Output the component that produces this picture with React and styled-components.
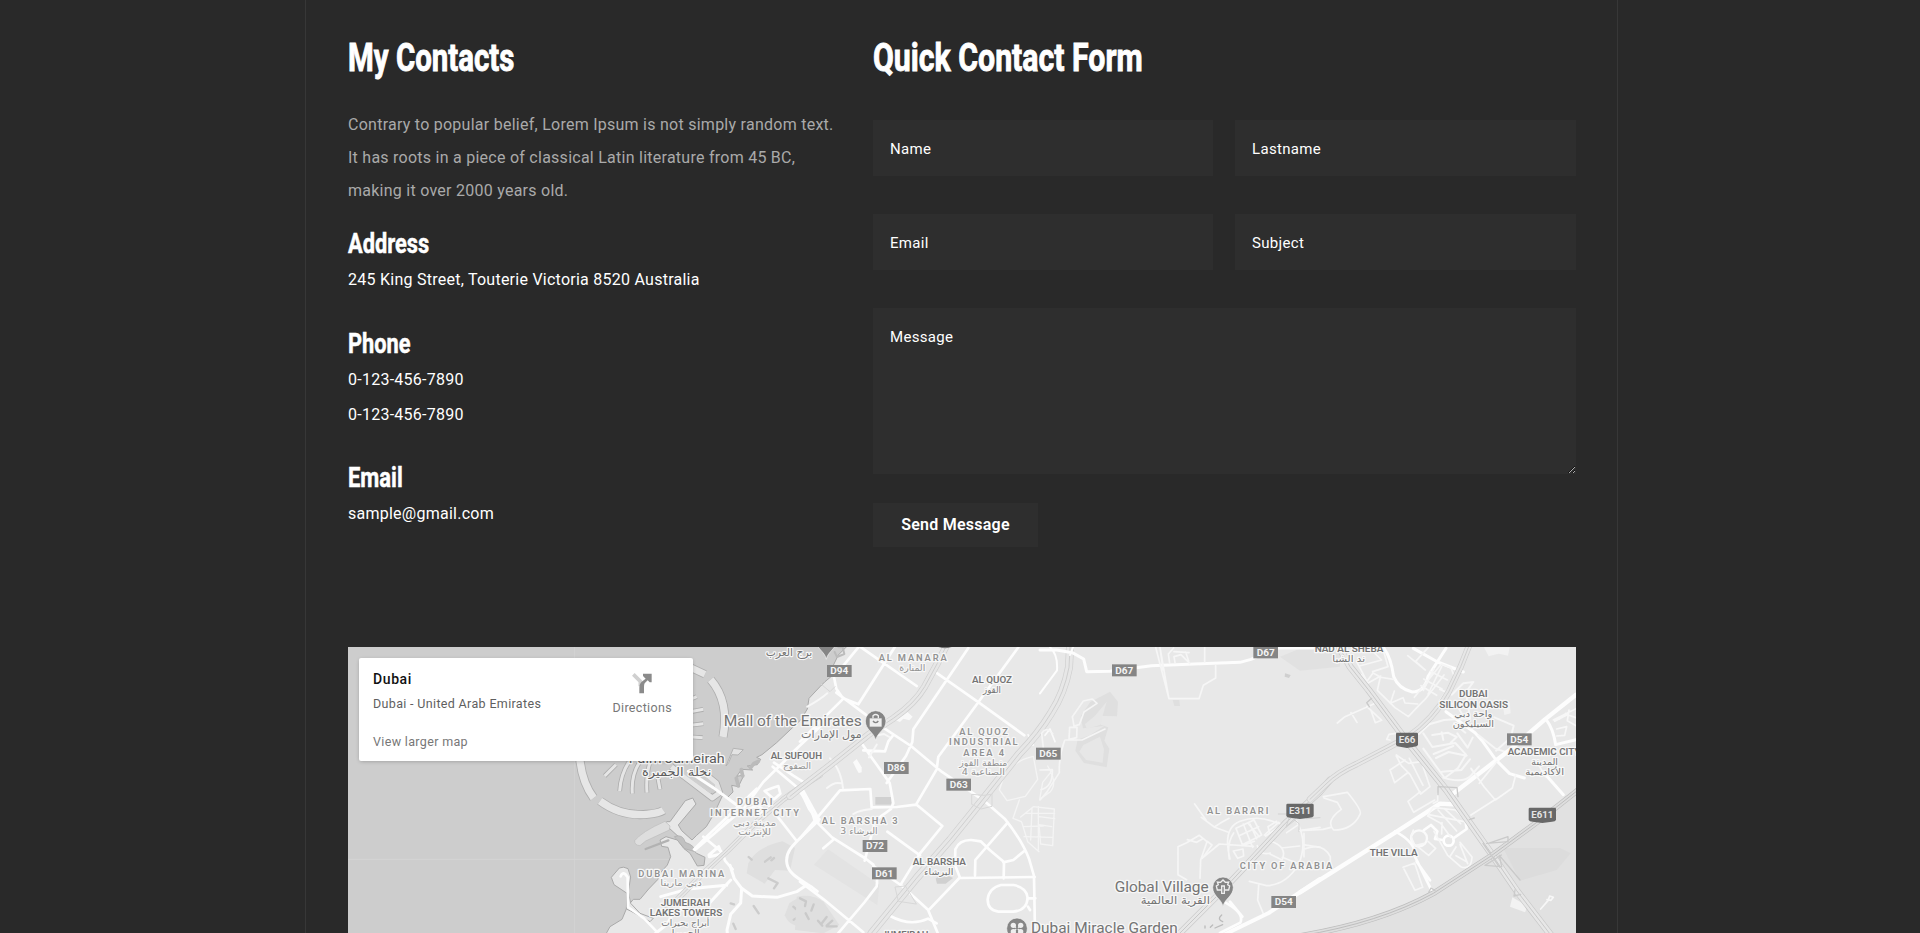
import React from 'react';
import styled, { createGlobalStyle } from 'styled-components';

const GlobalStyle = createGlobalStyle`
  * { box-sizing: border-box; }
  body { margin: 0; background: #292929; overflow: hidden; font-family: Roboto, sans-serif; color: #fff; }
  h2, h3, p { margin: 0; }
`;

const Page = styled.div`
  height: 933px;
  overflow: hidden;
`;

const Frame = styled.main`
  width: 1313px;
  height: 933px;
  margin-left: 305px;
  padding: 28px 41px 0 42px;
  border: solid #373737;
  border-width: 0 1px;
  overflow: hidden;
`;

const Columns = styled.div`
  display: flex;
  height: 619px;
`;

const Contacts = styled.section`
  width: 525px;
`;

const FormSide = styled.section`
  flex: 1;
`;

const Title = styled.h2`
  display: block;
  width: max-content;
  height: 60px;
  font-size: 39.5px;
  line-height: 60px;
  font-weight: 700;
  white-space: nowrap;
  -webkit-text-stroke: 0.9px #fff;
  transform-origin: 0 50%;
  transform: scaleX(${(p) => p.$squeeze});
`;

const SubTitle = styled.h3`
  width: max-content;
  margin-top: ${(p) => p.$gap}px;
  margin-bottom: -1px;
  padding-top: 1px;
  font-size: 28.5px;
  line-height: 38px;
  font-weight: 700;
  -webkit-text-stroke: 0.5px #fff;
  transform-origin: 0 50%;
  transform: scaleX(${(p) => p.$squeeze});
`;

const Intro = styled.p`
  width: 510px;
  margin-top: 20px;
  font-size: 16px;
  line-height: 33px;
  letter-spacing: 0.255px;
  color: #aaa;
`;

const Detail = styled.p`
  font-size: 16px;
  line-height: 35px;
  letter-spacing: 0.25px;
  color: #fff;
`;

const Form = styled.form`
  display: grid;
  grid-template-columns: 340px 341px;
  column-gap: 22px;
  row-gap: 38px;
  margin-top: 32px;
`;

const Field = styled.input`
  height: 56px;
  padding: 1px 16px 0 17px;
  border: 0;
  background: #2e2e2e;
  font: 400 15px Roboto, sans-serif;
  letter-spacing: 0.33px;
  color: #fff;
  outline: 0;
  &::placeholder { color: #fff; opacity: 1; }
`;

const MessageField = styled.textarea`
  grid-column: 1 / -1;
  display: block;
  height: 166px;
  padding: 20px 17px;
  border: 0;
  background: #2e2e2e;
  font: 400 15px Roboto, sans-serif;
  letter-spacing: 0.33px;
  color: #fff;
  outline: 0;
  resize: both;
  &::placeholder { color: #fff; opacity: 1; }
`;

const SendButton = styled.button`
  width: 165px;
  height: 44px;
  margin-top: -9px;
  padding: 0 0 1px;
  border: 0;
  background: #2e2e2e;
  font: 600 16px Roboto, sans-serif;
  letter-spacing: 0.25px;
  color: #fff;
`;

const MapBox = styled.section`
  position: relative;
  height: 286px;
  overflow: hidden;
  background: #cdcdcd;
`;

const MapDrawing = styled.svg`
  display: block;
  width: 1228px;
  height: 286px;
`;

const PlaceCard = styled.div`
  position: absolute;
  left: 11px;
  top: 11px;
  display: flex;
  justify-content: space-between;
  width: 334px;
  height: 103px;
  padding: 11px 21px 0 14px;
  border-radius: 2px;
  background: #fff;
  box-shadow: 0 1px 4px -1px rgba(0, 0, 0, 0.3);
`;

const PlaceText = styled.div`
  display: flex;
  flex-direction: column;
  white-space: nowrap;
`;

const PlaceName = styled.div`
  font-size: 14px;
  line-height: 20px;
  font-weight: 500;
  letter-spacing: 0.6px;
  color: #111;
`;

const PlaceInfo = styled.div`
  margin-top: ${(p) => p.$gap}px;
  font-size: 12.5px;
  line-height: 16px;
  letter-spacing: 0.34px;
  color: ${(p) => p.$tone};
`;

const Directions = styled.div`
  display: flex;
  flex-direction: column;
  align-items: center;
  padding-top: 4px;
`;

const INK = { dark: '#5c5c5c', mid: '#747474', light: '#929292' };

/* Map geometry is kept in thirds of a pixel; each district has its own x origin. */
const ORIGIN = { coast: 660, barsha: 1380, village: 2100, oasis: 2880 };

const District = ({ at, children }) => <g transform={`translate(${ORIGIN[at]} 0)`}>{children}</g>;

const Roads = ({ d, w = 8, c = '#fdfdfd' }) => (
  <path d={d} fill="none" stroke={c} strokeWidth={w} strokeLinecap="round" strokeLinejoin="round" />
);

const Highway = ({ d, w = 21, edge = '#cfcfcf', fill = '#e7e7e7' }) => (
  <>
    <Roads d={d} w={w} c={edge} />
    <Roads d={d} w={w - 4} c={fill} />
    <Roads d={d} w={3} c={edge} />
  </>
);

const Island = ({ d, w = 22 }) => (
  <>
    <path d={d} fill="none" stroke="#aeaeae" strokeWidth={w + 5} strokeLinejoin="round" />
    <path d={d} fill="none" stroke="#e6e6e6" strokeWidth={w} strokeLinejoin="round" />
  </>
);

const Label = ({ x, y, w, size = 28, tone = 'mid', weight = 600, children }) => (
  <text
    x={x} y={y} fontSize={size} fontWeight={weight} fill={INK[tone]} textAnchor="middle"
    textLength={w} lengthAdjust={size > 36 || tone !== 'light' ? 'spacingAndGlyphs' : 'spacing'}
    stroke="#f7f7f7" strokeWidth="8" strokeLinejoin="round" paintOrder="stroke"
    fontFamily="Roboto, sans-serif"
  >{children}</text>
);

const Arabic = ({ x, y, w, size = 27, tone = 'light', children }) => (
  <text
    x={x} y={y} fontSize={size} fill={INK[tone]} textAnchor="middle"
    textLength={w} lengthAdjust="spacingAndGlyphs" direction="rtl"
    stroke="#f7f7f7" strokeWidth="7" strokeLinejoin="round" paintOrder="stroke"
    fontFamily="'DejaVu Sans', sans-serif"
  >{children}</text>
);

const Shield = ({ x, y, children }) => (
  <g>
    <rect x={x - 37} y={y - 18} width="74" height="36" fill="#858585" />
    <text x={x} y={y + 10} fontSize="28" fontWeight="700" fill="#f4f4f4" textAnchor="middle" textLength="54" lengthAdjust="spacingAndGlyphs" fontFamily="Roboto, sans-serif">{children}</text>
  </g>
);

const Badge = ({ x, y, w, children }) => (
  <g>
    <path d={`M${x - w / 2 + 4} ${y - 22}H${x + w / 2 - 4}q4 0 4 4V${y + 15}q-2 5 -12 5L${x} ${y + 24}L${x - w / 2 + 12} ${y + 20}q-10 0 -12 -5V${y - 18}q0 -4 4 -4z`} fill="#686868" />
    <text x={x} y={y + 10} fontSize="28" fontWeight="700" fill="#e4e4e4" textAnchor="middle" textLength={w - 16} lengthAdjust="spacingAndGlyphs" fontFamily="Roboto, sans-serif">{children}</text>
  </g>
);

const Pin = ({ x, y, children }) => (
  <g transform={`translate(${x} ${y})`}>
    <path d="M0 58C-5 33 -31 27 -31 0A31 31 0 0 1 31 0C31 27 5 33 0 58z" fill="#858585" stroke="#f4f4f4" strokeWidth="2" />
    {children}
  </g>
);

const CityMap = () => (
  <MapDrawing viewBox="24 21 3684 858" role="img" aria-label="Dubai">
    <rect x="0" y="0" width="3800" height="900" fill="#cdcdcd" />
    <Roads d="M704 0V900M24 658H990" w={3} c="#d4d4d4" />

    <District at="coast">
      <path
        d="M860 20L835 45L818 80L825 100L795 125L780 140L747 175L742 207L722 240L690 270L650 308L606 344L590 352L602 358L592 374L562 378L578 390L545 388L530 409L552 405L535 440L515 436L519 456L503 472L487 468L460 525L439 560L410 586L396 600L365 572L355 555L408 492L398 474L376 482L330 545L320 545L314 552L410 640L435 652L432 676L412 678L390 640L372 626L352 600L318 590L300 600L305 619L324 622L332 650L322 675L300 700L293 719L266 747L240 778L220 778L210 790L199 807L186 838L150 860L128 900H3100V0H860z"
        fill="#e8e8e8" stroke="#aaa" strokeWidth="3" strokeLinejoin="round"
      />
      <path d="M154 712L178 684Q190 678 204 686L212 711L205 755L212 790L240 820L280 835L270 845L212 813L199 807L201 760L162 734z" fill="#e8e8e8" stroke="#aaa" strokeWidth="3" />
      <path d="M343 590Q368 580 376 607Q406 617 405 635L374 626z" fill="#c1c1c1" stroke="#aaa" strokeWidth="2" />
      <Island d="M60 362Q68 430 101 474" />
      <Island d="M120 483Q183 530 260 523Q297 520 310 511" />
      <Island d="M390 82L435 103" w={20} />
      <Island d="M452 119Q509 185 489 291" w={22} />
      <Island d="M168 374L134 408M206 367Q182 404 179 453M239 366Q213 406 217 461M270 366Q257 409 261 458M293 410L300 448" w={9} />
      <Island d="M398 175L410 170M398 214L430 208M398 255L430 251M398 291L428 293" w={9} />
      <Island d="M334 380L457 474L479 458L469 429L427 395" w={15} />
      <Roads d="M352 384L451 456L462 436L414 395" w={7} c="#cfcfcf" />
      <Roads d="M385 394L460 443L550 510" w={9} />
      <path d="M224 602Q245 575 315 544L330 558L328 570L257 603L240 617Q223 616 224 602z" fill="#dedede" stroke="#bbb" strokeWidth="2" />
      <Roads d="M257 627L325 601" w={7} c="#b2b2b2" />
      <path d="M498 378L520 325L550 329L534 345L516 344L506 368z" fill="#e3e3e3" stroke="#b4b4b4" strokeWidth="3" />
      <Roads d="M535 438L529 415M548 408L544 389M572 383L582 370L595 364" w={11} c="#bbb" />
      <path d="M565 670Q590 620 668 604L705 624L690 692L645 690L614 731L560 700z" fill="#dfdfdf" />
      <path d="M688 790Q730 757 768 793Q786 839 747 862Q690 865 674 826z" fill="#dfdfdf" />
      <Roads d="M625 715l28 14l-11 16M566 651l9 8M615 665l17 -13M634 661l8 -7M512 790l10 3M520 851l7 16M581 798l15 22M700 800l20 18l12 -13M748 787l11 12M701 839l13 -7M773 829l-3 23" w={7} c="#ccc" />

      <Roads d="M405 630L552 505L610 426L700 337L770 265M402 628L440 590L590 446M468 575L505 540M430 590L488 638L495 662L518 688M552 511L620 488L710 603M575 486L610 508L592 541M638 380L720 449L748 508L775 545M642 368L700 407L738 431M723 440L774 533M700 335L780 260M635 445L655 438L661 461L642 478L614 453z" />
      <Roads d="M778 538C713 606 672 626 681 672C687 703 719 717 756 742L772 754M510 676L523 716L545 745L577 768L651 772L710 755L740 735M545 745L542 789L512 823L501 870L504 900M512 720L448 790L410 780L370 801L340 818L322 852L282 884M302 770L380 748L442 741L500 736M448 650L485 642L476 620L447 645z" w={9} />
      <Roads d="M182 709Q190 690 203 712L204 801L252 835L290 875" w={8} />
      <Highway d="M780 405L720 443L670 478L590 545L505 630L425 704L350 780L318 795" w={17} />
    </District>

    <District at="barsha">
      <path d="M84 628L238 734L232 795L42 674z" fill="#e3e3e3" />
      <path d="M-10 770Q35 760 70 785L118 855L70 880L-15 870z" fill="#dfdfdf" />
      <Roads d="M0 775l18 9l-3 14M17 820l9 17M41 793l-7 19M80 831l-14 18M54 842l13 15M80 859l30 0M80 857l17 -15" w={7} c="#cacaca" />
      <rect x="226" y="471" width="48" height="23" fill="#d0d0d0" />
      <path d="M407 715l25 -14l27 13l-22 17h-26z" fill="#d0d0d0" />
      <path d="M285 240l33 -28l20 18l-10 11l-18 -5l-10 10z" fill="#f9f9f9" />
      <path d="M159 367l11 -10l15 25v15l-9 2l-7 -12z" fill="#fafafa" />
      <Roads d="M115 22l13 0l5 20l-22 9l-7 -15" w={6} c="#bcbcbc" />

      <Roads d="M175 22L102 111L109 146L130 176L0 305M285 20L175 193L135 177L109 158M183 22L350 138M505 24L340 268L337 306L318 348L285 394L260 429M655 22L536 185L415 350L410 388L348 494L290 501L217 502M400 92L540 190L673 286M109 158L245 260L333 318L425 395L520 460L560 489L614 536Q667 602 687 656L702 708L705 879M215 503L211 447L120 451L0 595M0 456L30 495L43 539L96 592L194 654L220 674Q235 702 230 739L194 786L106 890M0 725L71 778L190 877M188 314L213 350L269 429L280 489L273 507L226 541L194 662M190 331L255 334L265 304L280 285M262 575L360 646M350 494L427 558L360 640L302 734L384 809L413 879M220 678L302 735" />
      <Roads d="M388 808L478 714L704 711M480 713L465 675L466 628Q478 599 514 600L542 604L570 631L612 666L611 715M525 706L526 660L623 548M610 667L640 660L673 633M603 735H641Q681 743 683 774Q680 812 639 815H595Q563 811 563 778Q567 744 603 735M682 775H706M690 810L684 800M271 828Q331 861 384 836L410 850M70 625L100 599" w={8} />
      <Roads d="M90 355Q124 390 129 445M81 444Q103 425 122 430M207 352L230 314M233 286L252 282L268 291M82 160Q59 180 22 200M160 522Q180 510 215 507" w={6} c="#f7f7f7" />
      <Roads d="M598 450Q620 365 700 349L713 418L676 469L621 482L600 452M658 480L639 535L664 545M743 378Q775 430 750 456L719 478L728 427L756 392M662 531L700 500L763 507L758 617L722 612L717 554L755 560M665 546L683 605L717 635M671 560L730 558M696 505L692 600M717 530L764 536M672 590L758 592M715 500L715 630M677 520L764 520" w={4} c="#f4f4f4" />
      <Roads d="M735 286L750 267L765 305M684 284L700 315L668 323" w={5} c="#fafafa" />

      <Highway d="M438 20L412 70L374 140Q345 190 280 235L205 284L90 376L0 445L-30 469" />
      <Highway d="M810 22L807 82Q793 158 754 218Q716 281 657 342L540 489L451 599L350 714L215 879" w={24} />
      <Roads d="M105 140L90 155L64 133M550 466l-35 -3v30l28 14l33 -8v-35zM315 738l-30 3l10 43l53 8z" w={3} c="#d8d8d8" />
    </District>

    <District at="village">
      <path d="M210 155l24 31l-3 43l-66 -2l17 27l23 8l-12 40l15 24l-8 56l-68 -13l-26 -37l7 -33l38 -14l41 -27l-63 7l-7 -36l29 -43z" fill="#dfdfdf" />
      <path d="M200 185l-35 42l-30 25l5 15l40 -12M180 290l-50 25l-12 20l20 25l50 8l4 -40z" fill="#e7e7e7" />
      <path d="M398 180h20l2 18h-17z" fill="#dfdfdf" />
      <path d="M735 100l17 5l-5 9l-13 -4z" fill="#cfcfcf" />
      <path d="M720 50L790 22H900V80L780 92z" fill="#e1e1e1" />
      <Roads d="M0 30H50L97 38L131 57L140 95L210 94L334 77L462 72L600 67L633 58L710 24H840" w={9} />
      <Roads d="M100 20L90 45M0 160L51 91Q54 43 30 22" w={6} />
      <Roads d="M347 22L387 176H477L490 136L527 114V77M360 22L386 172M389 70L385 42L401 24M405 68L402 50L423 44L449 70M437 36L446 64M494 22V66M360 22L369 90M402 35L447 38" w={5} c="#f6f6f6" />
      <Roads d="M74 301Q56 351 58 398L20 457L0 480M77 300H126L195 267M102 258L97 230L130 183L157 177L171 190L132 216L118 254zM89 262L111 262L110 293L87 298zM11 333L5 280Q18 258 38 281M0 390L37 389Q39 440 3 449" w={5} c="#f5f5f5" />
      <Roads d="M480 715L482 660L501 605L478 586L440 608L414 620V704L440 719M442 599L470 607L487 597M502 604L516 615L487 655M486 655L538 612L640 619M570 657Q546 565 600 544Q656 523 713 550M568 657Q560 609 581 579M588 565L607 614L665 585L642 540L588 565M597 587L656 560M614 615L643 604M630 552L650 596M580 633L609 627L611 648L593 655zM673 585L716 547L724 556L677 588M484 532L523 561L540 550L567 535M524 562L563 576M464 492L498 540M610 552L638 622M624 550L658 590M688 577L684 560L710 544" w={5} c="#f6f6f6" />
      <Roads d="M770 543Q805 608 775 674Q740 734 680 737L628 724M688 602Q745 620 726 660L690 642M652 617Q661 648 691 639M780 572L840 562M789 614L840 622M724 624L779 618M727 652L770 669M656 736L653 780L671 824M795 680L840 670M740 578L771 557" w={5} c="#f6f6f6" />
      <Roads d="M840 717L686 819L540 890" w={12} />
      <Roads d="M551 785Q615 819 601 848L540 879M570 785L607 830" w={8} />
      <Roads d="M545 825q-15 13 3 20M518 855l-7 7M548 854l-23 10M495 858v6" w={4} c="#bbb" />
      <Highway d="M870 420L840 455L736 550L640 653L540 759L410 889" w={20} edge="#c8c8c8" />
      <Roads d="M715 522H743L777 551V575M750 525L738 562L765 540M800 536L840 533" w={3} c="#d2d2d2" />
    </District>

    <District at="oasis">
      <path d="M900 400L828 455L720 540L570 650L400 760Q250 842 -100 900H900z" fill="#e1e1e1" />
      <path d="M609 624H780L812 640L770 690L660 722z" fill="#dcdcdc" />
      <Roads d="M250 22Q273 52 281 110Q296 147 337 156Q374 156 384 110L427 42L438 25M340 25L413 66L490 96M438 215L525 278L548 304L588 360L629 401L673 414M735 402L790 464M738 238Q760 266 767 314L828 299" w={9} />
      <Roads d="M170 65L201 124L219 99L241 111L232 151L285 203L325 230L354 199L378 175L432 105M218 95L264 80L251 34M237 111L281 118M323 47L376 90L347 64L385 22M283 153L271 190L309 173L315 189L353 192M343 172L424 72L453 83L465 116L418 184M390 94L442 120M371 117L426 147M363 137L410 166M402 86L370 151M425 80L384 162M184 104L203 130L242 108M178 78L245 60L216 32" w={5} c="#f6f6f6" />
      <Roads d="M357 282L388 253L432 240L510 235L498 156L520 126L490 130L455 164L420 148M370 280L397 321L466 309L498 344L474 384L434 414L370 326M401 342L460 318M397 285L443 278L470 291L452 308M425 277L430 300M408 354L446 336L500 347M430 413Q489 431 512 408L537 379M426 395L484 390L510 358M472 280L503 323L518 293M462 250L496 278M420 195L467 190L491 230M535 285L585 325L620 337M583 232L641 257L632 293L588 332" w={6} c="#f6f6f6" />
      <Roads d="M112 249L135 230L226 190M153 218L171 247M200 199L245 241L226 248L212 209M270 300L260 298L267 283L288 280M289 345L326 370L364 365L390 440L362 462L330 403L304 377L289 348M315 360L270 390L284 428L322 399M361 455L324 484L341 517L404 480M328 355L369 436M413 460V483L400 490M70 470L142 457Q188 513 180 523Q158 570 101 570Q75 543 124 508L112 487L72 474M0 572L69 568L93 562M12 580V650M11 628Q68 604 91 650V680M309 682L344 669L368 742L345 751L312 687" w={5} c="#f6f6f6" />
      <Roads d="M0 757L290 575L420 491L460 493M457 463L590 360L633 327L735 238L828 164" w={13} />
      <Roads d="M285 574Q349 607 345 650L398 758M350 665L390 721" w={8} />
      <circle cx="357" cy="595" r="24" fill="none" stroke="#fafafa" strokeWidth="7" />
      <circle cx="446" cy="602" r="15" fill="none" stroke="#fff" strokeWidth="8" />
      <Roads d="M372 570L393 555L412 574L405 597L429 600M460 595L500 567L496 540" w={8} />
      <Roads d="M496 540L466 510L399 502L383 528L422 550L452 592M414 510L470 573M433 506L482 551M386 524L493 545M426 548L425 582M402 574L443 646L482 680Q514 692 516 651L480 607M468 647L500 665M468 621L449 651M480 613L503 671M340 570L333 590L345 617L373 610M353 620L386 646L407 625L384 604" w={5} c="#f7f7f7" />
      <Roads d="M513 385L552 440L586 480L637 444L647 405M590 365L538 430M514 388L527 403M513 525L588 477M736 410L718 378M760 240L828 206M764 244L802 224L828 233M770 267L800 260L794 286L770 288M779 237L797 220M807 210L802 242L828 257M722 807L744 782L749 768L760 772L753 781L741 779" w={5} c="#f7f7f7" />
      <path d="M610 205l9 -24l10 5l3 34l-19 5zM630 800l7 -28l46 27l-8 18zM552 22l14 27l30 -8l28 6l5 -25z" fill="#f2f2f2" />
      <Highway d="M30 478L78 432Q112 398 170 372L270 320L322 292Q400 239 446 156L482 80L510 10" w={19} />
      <Highway d="M118 22L150 80L205 149L318 300L440 451L570 635L650 752L760 895" w={21} edge="#c8c8c8" />
      <Highway d="M880 414L828 455L720 540L570 650L400 760Q240 848 0 888" w={17} edge="#bebebe" fill="#dedede" />
      <Roads d="M415 440L471 443L474 470M414 440V464M208 200l-8 -12l15 -13M565 610l59 -20v15l-64 5M549 610L599 682M604 645L555 676L605 680L598 646L660 720M386 757l7 -13l12 8M645 750l-3 18l20 -5M508 539l15 -5" w={4} c="#cacaca" />
    </District>

    <District at="coast">
      <Arabic x={687} y={48} w={140} size={33} tone="mid">برج العرب</Arabic>
      <Label x={350} y={370} w={288} size={41} tone="dark" weight={400}>Palm Jumeirah</Label>
      <Arabic x={350} y={409} w={208} size={35} tone="dark">نخلة الجميرة</Arabic>
      <Label x={709} y={357} w={154}>AL SUFOUH</Label>
      <Arabic x={711} y={386} w={84}>الصفوح</Arabic>
      <Label x={584} y={496} w={106} tone="light">DUBAI</Label>
      <Label x={584} y={528} w={266} tone="light">INTERNET CITY</Label>
      <Arabic x={584} y={557} w={130}>مدينة دبي</Arabic>
      <Arabic x={584} y={586} w={98}>للإنترنت</Arabic>
      <Label x={364} y={710} w={258} tone="light">DUBAI MARINA</Label>
      <Arabic x={363} y={739} w={124}>دبي مارينا</Arabic>
      <Label x={376} y={799} w={148}>JUMEIRAH</Label>
      <Label x={378} y={829} w={218}>LAKES TOWERS</Label>
      <Arabic x={376} y={859} w={144} tone="mid">أبراج بحيرات</Arabic>
      <Arabic x={377} y={888} w={84} tone="mid">الجميرا</Arabic>
    </District>

    <District at="barsha">
      <Pin x={79} y={0} />
      <Pin x={227} y={243}>
        <path d="M-18 -8H18V17H-18z" fill="#eee" />
        <path d="M-8 -8V-16Q0 -23 8 -16V-8" fill="none" stroke="#eee" strokeWidth="4" />
        <path d="M-8 0Q0 10 8 0" fill="none" stroke="#858585" strokeWidth="4" />
      </Pin>
      <ellipse cx="435" cy="15" rx="24" ry="10" fill="#777" />
      <Label x={338} y={62} w={204} tone="light">AL MANARA</Label>
      <Arabic x={337} y={92} w={78}>المنارة</Arabic>
      <Label x={576} y={130} w={120}>AL QUOZ</Label>
      <Arabic x={576} y={160} w={54} tone="mid">القوز</Arabic>
      <Label x={-22} y={257} w={414} size={44} tone="mid" weight={400}>Mall of the Emirates</Label>
      <Arabic x={94} y={294} w={182} size={33} tone="mid">مول الإمارات</Arabic>
      <Label x={551} y={284} w={146} tone="light">AL QUOZ</Label>
      <Label x={550} y={316} w={206} tone="light">INDUSTRIAL</Label>
      <Label x={551} y={348} w={122} tone="light">AREA 4</Label>
      <Arabic x={550} y={377} w={144}>منطقة القوز</Arabic>
      <Arabic x={550} y={406} w={130}>الصناعية 4</Arabic>
      <Label x={179} y={553} w={228} tone="light">AL BARSHA 3</Label>
      <Arabic x={177} y={582} w={112}>البرشاء 3</Arabic>
      <Label x={418} y={675} w={160}>AL BARSHA</Label>
      <Arabic x={416} y={704} w={88} tone="mid">البرشاء</Arabic>
      <Label x={315} y={894} w={140}>JUMEIRAH</Label>
      <Shield x={118} y={93}>D94</Shield>
      <Shield x={289} y={384}>D86</Shield>
      <Shield x={476} y={434}>D63</Shield>
      <Shield x={745} y={341}>D65</Shield>
      <Shield x={225} y={618}>D72</Shield>
      <Shield x={253} y={700}>D61</Shield>
      <Pin x={651} y={865}>
        <g fill="#eee">
          <circle cx="-11" cy="-9" r="8" /><circle cx="11" cy="-9" r="8" />
          <circle cx="-11" cy="10" r="8" /><circle cx="11" cy="10" r="8" />
        </g>
        <path d="M-14 -11L14 12M14 -11L-14 12" stroke="#eee" strokeWidth="4" />
        <circle r="4" fill="#858585" />
      </Pin>
      <Label x={913} y={879} w={440} size={44} tone="mid" weight={400}>Dubai Miracle Garden</Label>
    </District>

    <District at="village">
      <Shield x={253} y={91}>D67</Shield>
      <Shield x={677} y={37}>D67</Shield>
      <Label x={593} y={523} w={184} tone="light">AL BARARI</Label>
      <Badge x={780} y={513} w={82}>E311</Badge>
      <Label x={738} y={687} w={278} tone="light">CITY OF ARABIA</Label>
      <Label x={365} y={755} w={282} size={44} tone="mid" weight={400}>Global Village</Label>
      <Arabic x={406} y={791} w={208} size={33} tone="mid">القرية العالمية</Arabic>
      <Pin x={549} y={742}>
        <path d="M-4 18V-4H4V18zM-6 8L-17 8L-20 -4L-14 -8L-17 -16L-7 -15L0 -22L7 -15L17 -16L14 -8L20 -4L17 8L6 8" fill="none" stroke="#eee" strokeWidth="4" />
      </Pin>
      <Shield x={731} y={786}>D54</Shield>
    </District>

    <District at="oasis">
      <Label x={147} y={36} w={206}>NAD AL SHEBA</Label>
      <Arabic x={146} y={65} w={98} tone="mid">ند الشبا</Arabic>
      <Badge x={321} y={300} w={66}>E66</Badge>
      <Label x={520} y={172} w={86}>DUBAI</Label>
      <Label x={521} y={203} w={206}>SILICON OASIS</Label>
      <Arabic x={520} y={232} w={114} tone="mid">واحة دبي</Arabic>
      <Arabic x={520} y={261} w={124} tone="mid">السيليكون</Arabic>
      <Shield x={658} y={298}>D54</Shield>
      <Label x={732} y={346} w={218}>ACADEMIC CITY</Label>
      <Arabic x={734} y={375} w={80} tone="mid">المدينة</Arabic>
      <Arabic x={734} y={405} w={116} tone="mid">الأكاديمية</Arabic>
      <Badge x={727} y={525} w={82}>E611</Badge>
      <Label x={281} y={648} w={144}>THE VILLA</Label>
    </District>
  </MapDrawing>
);

const DirectionsIcon = () => (
  <svg width="20" height="21" viewBox="0 0 60 63" aria-hidden="true">
    <path d="M4 4L25 25V40" fill="none" stroke="#d0d0d0" strokeWidth="11" />
    <path d="M22 61V44Q22 32 31 25L41 17L33 9V2H59V28H53L47 22L38 31Q36 35 36 42V61z" fill="#8b8b8b" />
  </svg>
);

export default function App() {
  return (
    <Page>
      <GlobalStyle />
      <Frame>
        <Columns>
          <Contacts>
            <Title $squeeze={0.745}>My Contacts</Title>
            <Intro>
              Contrary to popular belief, Lorem Ipsum is not simply random text.<br />
              It has roots in a piece of classical Latin literature from 45 BC,<br />
              making it over 2000 years old.
            </Intro>
            <SubTitle $gap={17} $squeeze={0.765}>Address</SubTitle>
            <Detail>245 King Street, Touterie Victoria 8520 Australia</Detail>
            <SubTitle $gap={27} $squeeze={0.765}>Phone</SubTitle>
            <Detail>0-123-456-7890</Detail>
            <Detail>0-123-456-7890</Detail>
            <SubTitle $gap={26} $squeeze={0.77}>Email</SubTitle>
            <Detail>sample@gmail.com</Detail>
          </Contacts>
          <FormSide>
            <Title $squeeze={0.766}>Quick Contact Form</Title>
            <Form>
              <Field placeholder="Name" />
              <Field placeholder="Lastname" />
              <Field placeholder="Email" />
              <Field placeholder="Subject" />
              <MessageField placeholder="Message" />
              <SendButton type="button">Send Message</SendButton>
            </Form>
          </FormSide>
        </Columns>
        <MapBox>
          <CityMap />
          <PlaceCard>
            <PlaceText>
              <PlaceName>Dubai</PlaceName>
              <PlaceInfo $gap={7} $tone="#5f5f5f">Dubai - United Arab Emirates</PlaceInfo>
              <PlaceInfo $gap={22} $tone="#777">View larger map</PlaceInfo>
            </PlaceText>
            <Directions>
              <DirectionsIcon />
              <PlaceInfo $gap={6} $tone="#777">Directions</PlaceInfo>
            </Directions>
          </PlaceCard>
        </MapBox>
      </Frame>
    </Page>
  );
}
